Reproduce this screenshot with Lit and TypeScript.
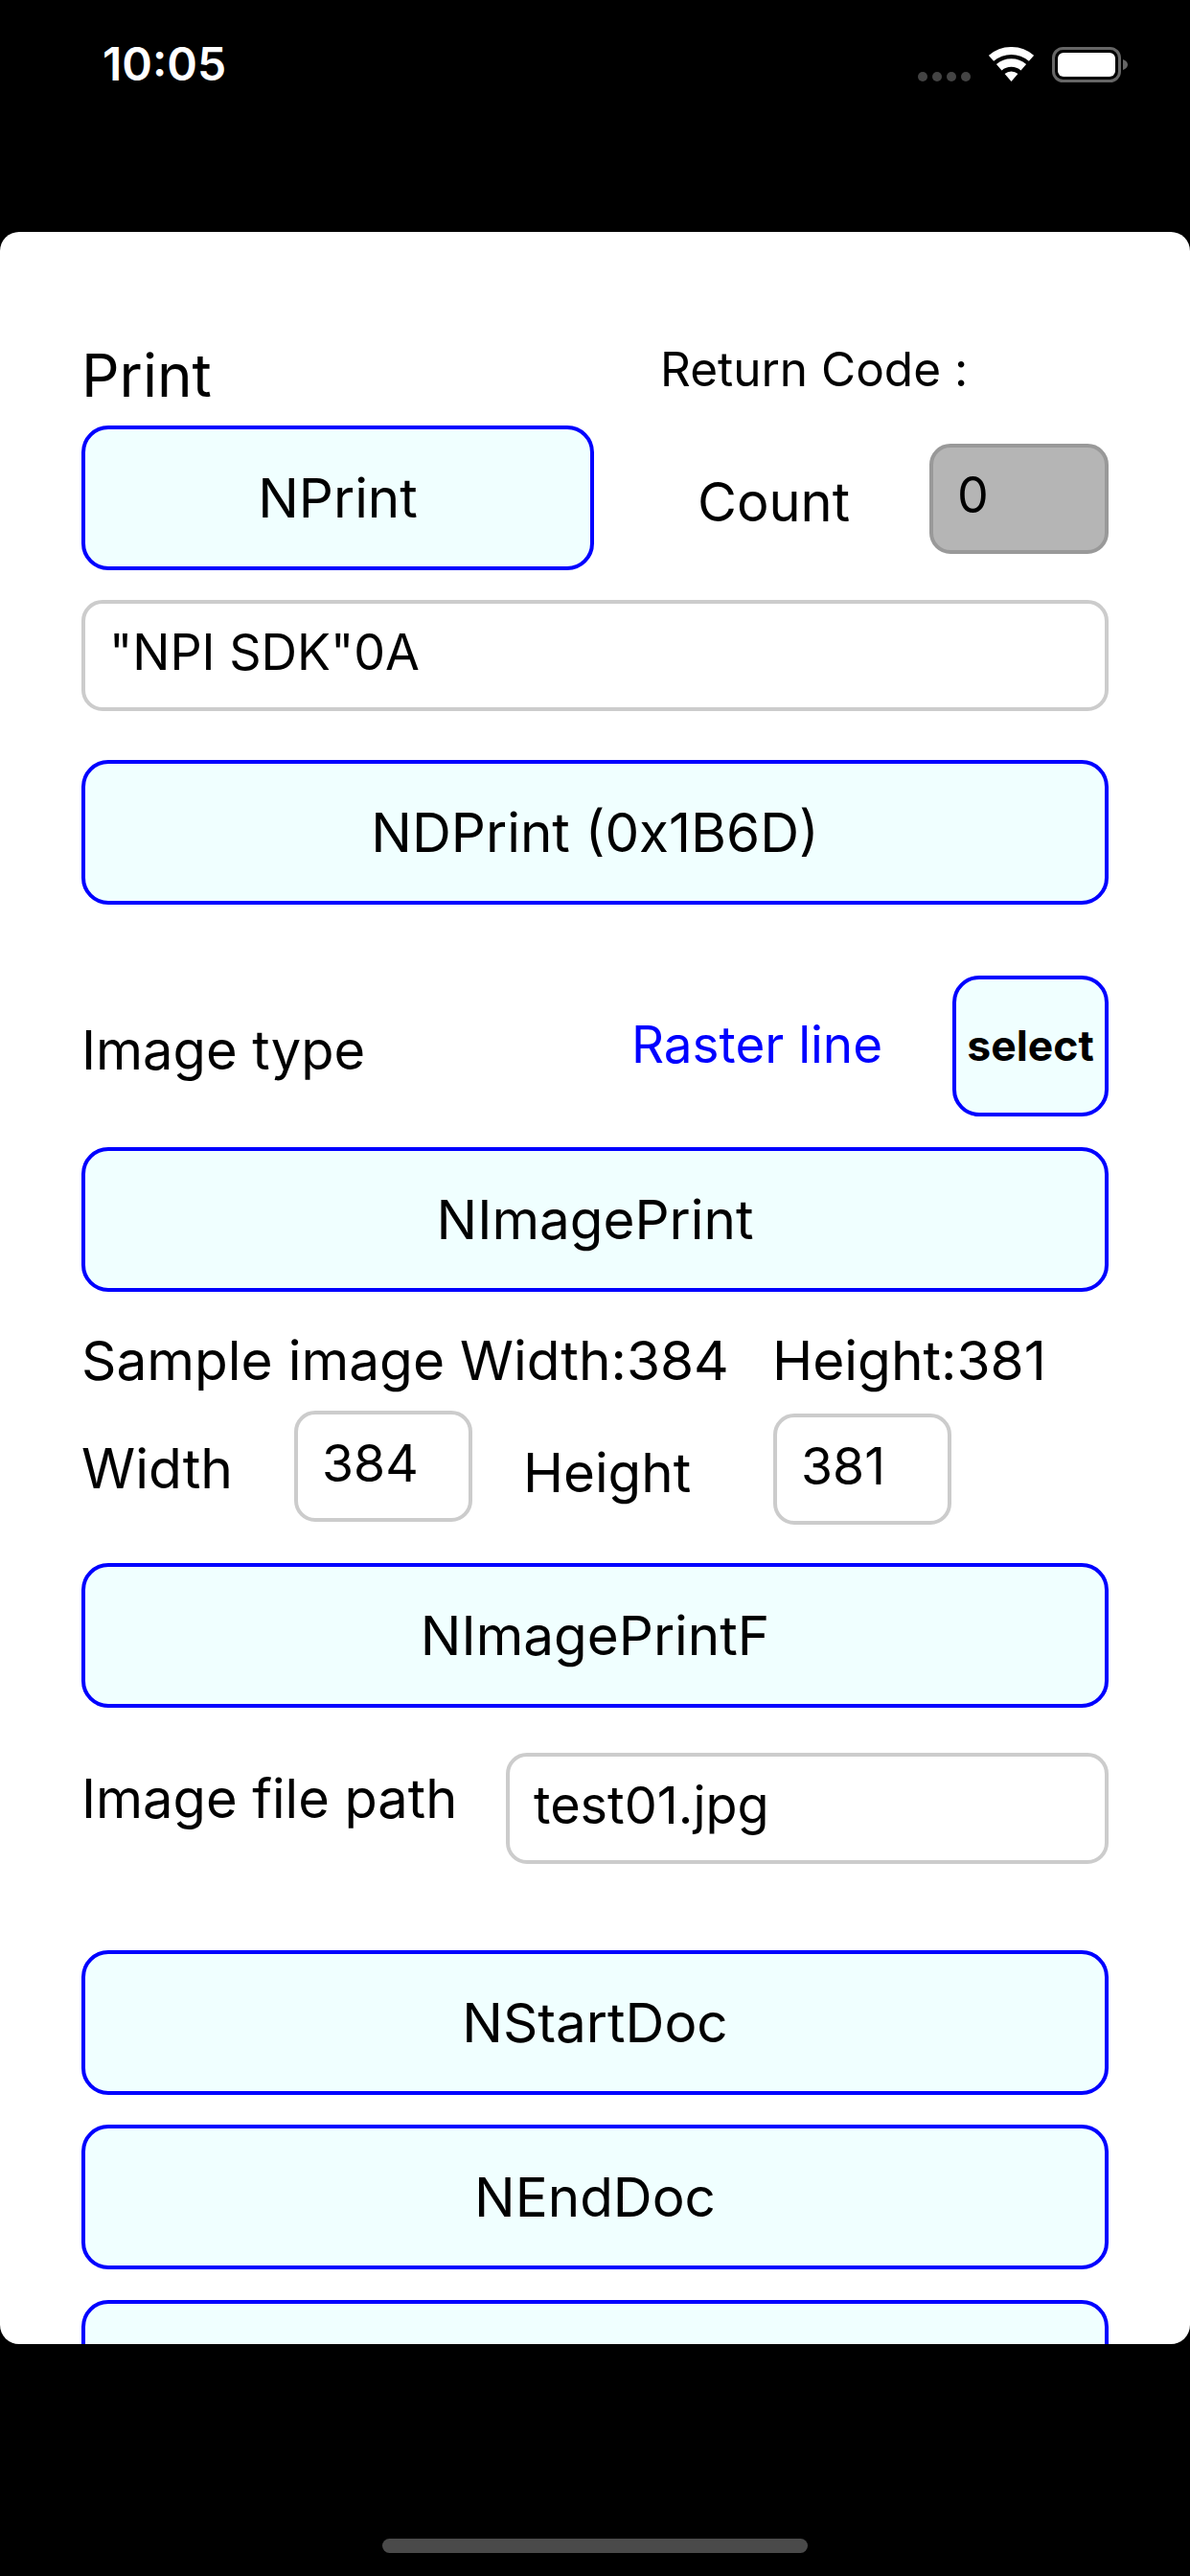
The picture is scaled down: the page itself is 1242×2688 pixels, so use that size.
import { LitElement, html, css } from "lit";
import { customElement } from "lit/decorators.js";

@customElement("app-root")
export class AppRoot extends LitElement {
  static styles = css`
    :host { display: block; width: 1242px; height: 2688px; background: #000; overflow: hidden; font-family: Inter, "Liberation Sans", sans-serif; color: #000; }
    * { box-sizing: border-box; }
    .status { height: 242px; display: flex; align-items: flex-start; padding: 0 65px 0 107px; color: #fff; }
    .time { margin-top: 44px; font-size: 48px; line-height: 46px; font-weight: 600; flex: 1; }
    .icons { display: flex; align-items: flex-start; margin-top: 49px; }
    .dots { display: flex; gap: 5px; margin-top: 26px; margin-right: 19px; }
    .dots i { width: 10px; height: 10px; border-radius: 50%; background: #444; }
    .wifi { width: 47px; height: 36px; margin-right: 19px; display: block; }
    .batt { width: 79px; height: 37px; display: block; }
    .card { height: 2204px; background: #fff; border-radius: 20px; overflow: hidden; padding: 0 85px; }
    .row { display: flex; align-items: flex-start; }
    .btn { border: 4px solid #00f; background: #f0ffff; border-radius: 28px; height: 151px; display: flex; align-items: center; justify-content: center; font-size: 56.6px; flex: none; }
    .full { width: 1072px; }
    .field { border: 4px solid #ccc; border-radius: 22px; height: 116px; display: flex; align-items: center; padding: 0 0 8px 25px; font-size: 52px; background: #fff; flex: none; }
    .lbl { font-size: 56px; line-height: 60px; white-space: nowrap; }
    .head { margin-top: 103px; height: 250px; }
    .left { width: 535px; flex: none; }
    .print { font-size: 62px; line-height: 70px; height: 99px; padding-top: 12px; }
    .right { margin-left: 69px; }
    .rc { font-size: 49.5px; line-height: 56px; margin-top: 12px; white-space: nowrap; }
    .countRow { display: flex; align-items: flex-start; margin-top: 50px; margin-left: 39px; }
    .countLbl { width: 242px; padding-top: 31px; }
    .count { width: 187px; height: 115px; background: #b5b5b5; border-color: #999; }
    .npi { width: 1072px; margin-top: 31px; }
    .mt51 { margin-top: 51px; }
    .typeRow { margin-top: 74px; height: 147px; }
    .typeLbl { width: 574px; margin-top: 48px; }
    .raster { width: 335px; margin-top: 42px; font-size: 53px; line-height: 60px; color: #00f; white-space: nowrap; }
    .select { width: 163px; height: 147px; font-size: 44.5px; font-weight: 700; padding-bottom: 2px; }
    .mt32 { margin-top: 32px; }
    .mt31 { margin-top: 31px; }
    .sample { margin-top: 42px; height: 60px; display: flex; font-size: 56.8px; }
    .sampleA { width: 721px; }
    .sizeRow { margin-top: 22px; height: 119px; }
    .w { width: 222px; margin-top: 31px; font-size: 57px; }
    .small { width: 186px; font-size: 53.5px; }
    .h { width: 260px; margin-left: 53px; margin-top: 35px; margin-right: 1px; font-size: 56.5px; }
    .mt3 { margin-top: 3px; }
    .mt40 { margin-top: 40px; }
    .fileRow { margin-top: 47px; height: 116px; }
    .fileLbl { width: 443px; margin-top: 18px; }
    .file { width: 629px; font-size: 54px; }
    .mt90 { margin-top: 90px; }
    .home { width: 444px; height: 15px; border-radius: 8px; background: #4a4a4a; margin: 203px 0 0 399px; }
  `;

  render() {
    return html`
      <div class="status">
        <div class="time">10:05</div>
        <div class="icons">
          <div class="dots"><i></i><i></i><i></i><i></i></div>
          <svg class="wifi" viewBox="0 0 47 36">
            <path d="M2.500 11.850A32 32 0 0 1 44.500 11.850" fill="none" stroke="#fff" stroke-width="8"/>
            <path d="M10.700 21.300A19.500 19.500 0 0 1 36.300 21.300" fill="none" stroke="#fff" stroke-width="8.500"/>
            <path d="M23.500 36L16.600 28.100A10.500 10.500 0 0 1 30.400 28.100Z" fill="#fff"/>
          </svg>
          <svg class="batt" viewBox="0 0 79 37">
            <rect x="1.500" y="1.500" width="69" height="34" rx="10" fill="none" stroke="#666" stroke-width="3"/>
            <rect x="6" y="6" width="60" height="25" rx="6" fill="#fff"/>
            <path d="M74 13c3 1 5 3 5 5.500s-2 4.500-5 5.500z" fill="#666"/>
          </svg>
        </div>
      </div>
      <div class="card">
        <div class="row head">
          <div class="left">
            <div class="print">Print</div>
            <div class="btn">NPrint</div>
          </div>
          <div class="right">
            <div class="rc">Return Code :</div>
            <div class="countRow">
              <div class="lbl countLbl">Count</div>
              <div class="field count">0</div>
            </div>
          </div>
        </div>
        <div class="field npi">"NPI SDK"0A</div>
        <div class="btn full mt51">NDPrint (0x1B6D)</div>
        <div class="row typeRow">
          <div class="lbl typeLbl">Image type</div>
          <div class="raster">Raster line</div>
          <div class="btn select">select</div>
        </div>
        <div class="btn full mt32">NImagePrint</div>
        <div class="lbl sample"><span class="sampleA">Sample image Width:384</span><span>Height:381</span></div>
        <div class="row sizeRow">
          <div class="lbl w">Width</div>
          <div class="field small">384</div>
          <div class="lbl h">Height</div>
          <div class="field small mt3">381</div>
        </div>
        <div class="btn full mt40">NImagePrintF</div>
        <div class="row fileRow">
          <div class="lbl fileLbl">Image file path</div>
          <div class="field file">test01.jpg</div>
        </div>
        <div class="btn full mt90">NStartDoc</div>
        <div class="btn full mt31">NEndDoc</div>
        <div class="btn full mt32"></div>
      </div>
      <div class="home"></div>
    `;
  }
}
